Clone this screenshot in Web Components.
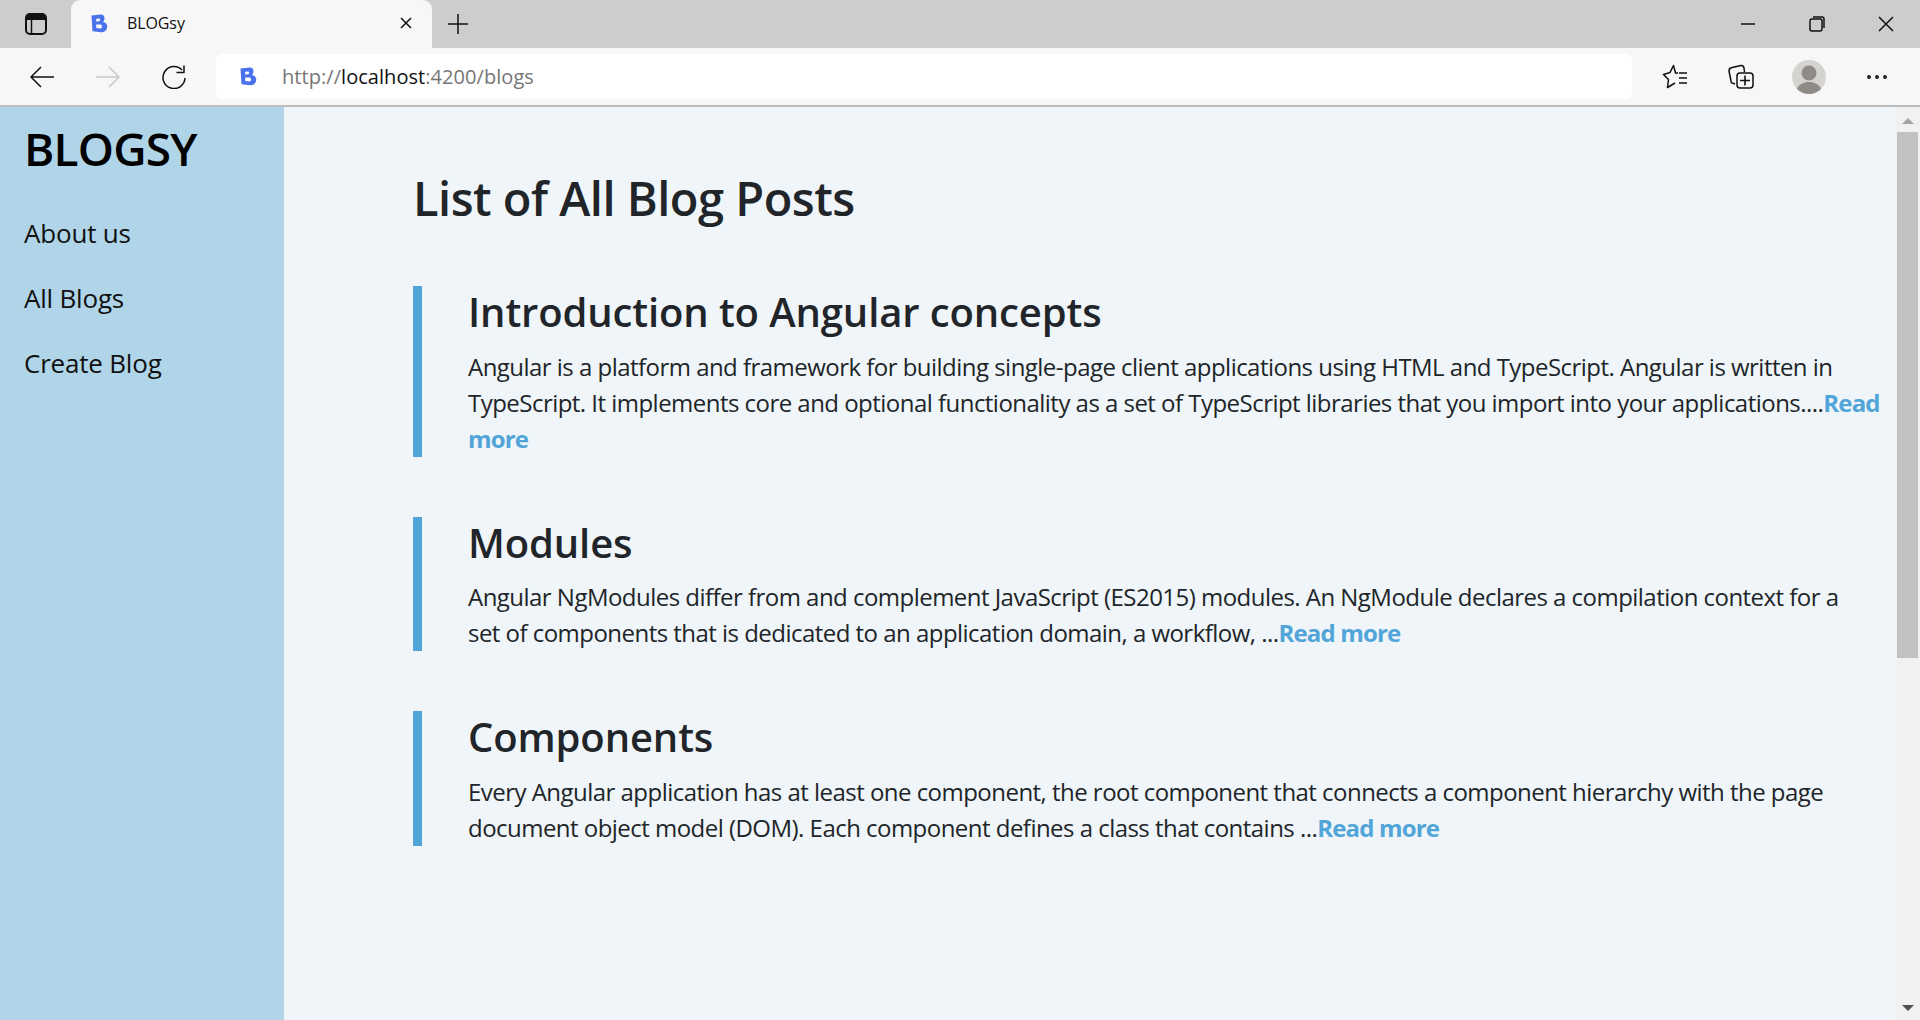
<!DOCTYPE html>
<html lang="en">
<head>
<meta charset="utf-8">
<title>BLOGsy</title>
<style>
  html, body { margin: 0; height: 100%; overflow: hidden; }
  body { display: flex; flex-direction: column; height: 1020px; font-family: "Open Sans", "Noto Sans", sans-serif; }
  .page { display: flex; flex: 1; min-height: 0; }
</style>
</head>
<body>
<browser-chrome></browser-chrome>
<div class="page">
  <side-bar>
    <span slot="brand">BLOGSY</span>
    <nav-link>About us</nav-link>
    <nav-link>All Blogs</nav-link>
    <nav-link>Create Blog</nav-link>
  </side-bar>
  <blog-list heading="List of All Blog Posts">
    <blog-post title-text="Introduction to Angular concepts">Angular is a platform and framework for building single-page client applications using HTML and TypeScript. Angular is written in TypeScript. It implements core and optional functionality as a set of TypeScript libraries that you import into your applications....</blog-post>
    <blog-post title-text="Modules">Angular NgModules differ from and complement JavaScript (ES2015) modules. An NgModule declares a compilation context for a<br>set of components that is dedicated to an application domain, a workflow, ...</blog-post>
    <blog-post title-text="Components">Every Angular application has at least one component, the root component that connects a component hierarchy with the page document object model (DOM). Each component defines a class that contains ...</blog-post>
  </blog-list>
  <scroll-bar></scroll-bar>
</div>

<script>
const favicon = `<svg class="fav" width="17" height="19" viewBox="0 0 17 19"><path fill-rule="evenodd" d="M.5 1.500L9.500.5C13 .5 13.500 3 13.500 4.500 13.500 6 12.500 7.500 12 8c2.500.5 4.500 2 4.200 5-.3 3.500-3 5.500-6.200 5.200L1.500 17.200zM5.200 4.700v2.800l3-.2c1.300-.3 1.300-2.600 0-2.800zM5.200 10.500v3.500l4.500.4c1.700 0 1.700-3.900 0-4z"/></svg>`;

class BrowserChrome extends HTMLElement {
  connectedCallback() {
    this.attachShadow({ mode: 'open' });
    this.shadowRoot.innerHTML = `
      <style>
        :host { display: block; flex: none; font-family: "Open Sans", sans-serif; color: #111; }
        svg { display: block; fill: none; stroke: currentColor; stroke-width: 1.5; stroke-linejoin: round; }
        svg.fav { fill: #4a72ea; stroke: none; flex: none; }
        .strip { height: 48px; background: #cdcdcd; display: flex; align-items: center; }
        .tabs-btn { width: 71px; display: flex; justify-content: center; }
        .tab { width: 361px; height: 48px; background: #f7f7f7; border-radius: 9px 9px 0 0; display: flex; align-items: center; box-sizing: border-box; padding: 0 0 2px 20px; }
        .tab .name { margin-left: 19px; flex: 1; font-size: 16px; letter-spacing: -.1px; }
        .tab svg:last-child { margin-right: 19px; }
        .plus { margin-left: 15px; }
        .win { margin-left: auto; display: flex; gap: 53px; padding-right: 26px; }
        .bar { height: 57px; background: #f7f7f7; border-bottom: 2px solid #bdbdbd; display: flex; align-items: center; }
        .nav { display: flex; gap: 42px; padding: 0 30px; width: 156px; }
        .addr { width: 1416px; height: 45px; background: #fff; border-radius: 6px; display: flex; align-items: center; }
        .addr svg.fav { margin-left: 24px; }
        .url { margin-left: 25px; font-size: 20px; letter-spacing: .05px; color: #767676; }
        .url b { font-weight: 400; color: #111; }
        .tools { display: flex; align-items: center; margin-left: 10px; }
        .tools .t { display: flex; width: 66px; justify-content: center; }
        .tools .t.avatar { width: 70px; }
      </style>
      <div class="strip">
        <div class="tabs-btn">
          <svg width="22" height="22" viewBox="0 0 22 22"><rect x="1" y="1" width="20" height="20" rx="4" stroke-width="2"/><path d="M1 4.500h20" stroke-width="5"/><path d="M6.500 6v14"/></svg>
        </div>
        <div class="tab">
          ${favicon}
          <span class="name">BLOGsy</span>
          <svg width="14" height="14" viewBox="0 0 14 14" stroke-width="2"><path d="M2 2l10 10M12 2L2 12"/></svg>
        </div>
        <svg class="plus" width="22" height="22" viewBox="0 0 22 22"><path d="M11 1v20M1 11h20"/></svg>
        <div class="win">
          <svg width="16" height="16" viewBox="0 0 16 16" stroke-width="1.2"><path d="M1 8h14"/></svg>
          <svg width="16" height="16" viewBox="0 0 16 16" stroke-width="1.2"><rect x="1" y="3" width="12" height="12" rx="2"/><path d="M4 1h9a2 2 0 0 1 2 2v9"/></svg>
          <svg width="16" height="16" viewBox="0 0 16 16" stroke-width="1.2"><path d="M1 1l14 14M15 1L1 15"/></svg>
        </div>
      </div>
      <div class="bar">
        <div class="nav">
          <svg width="24" height="24" viewBox="0 0 24 24"><path d="M24 12H1M11 2L1 12l10 10"/></svg>
          <svg width="24" height="24" viewBox="0 0 24 24" style="color:#c9c9c9"><path d="M0 12h23M13 2l10 10-10 10"/></svg>
          <svg width="24" height="24" viewBox="0 0 24 24" stroke-width="1.700"><path d="M20 5A11 11 0 1 0 23 13M22 .5v7h-7.500"/></svg>
        </div>
        <div class="addr">
          ${favicon}
          <span class="url">http://<b>localhost</b>:4200/blogs</span>
        </div>
        <div class="tools">
          <div class="t"><svg width="26" height="25" viewBox="0 0 26 25" stroke-width="2"><path d="M16 9h-2.500L11.500 1.500 8 8.500 1.500 10.500l5 5-1 8 7.500-4.500"/><path d="M17 9h8M17 14h8M17 19h8" stroke-width="1.600"/></svg></div>
          <div class="t"><svg width="26" height="25" viewBox="0 0 26 25" stroke-width="1.800"><path d="M7 20l-3-1q-1 0-1-2L1 7q0-3 3-3.500l9-2q2.500-.2 3 2.500l.5 4"/><rect x="9" y="9" width="16" height="15" rx="3"/><path d="M17 11.500v10M12 16.500h10" stroke-width="1.600"/></svg></div>
          <div class="t avatar"><svg width="34" height="34" viewBox="0 0 34 34" style="stroke:none"><circle cx="17" cy="17" r="17" fill="#d5d3cf"/><circle cx="17" cy="13" r="7.500" fill="#8f8c88"/><path d="M5 29c2-5 7-7 12-7s10 2 12 7a17 17 0 0 1-24 0z" fill="#8f8c88"/></svg></div>
          <div class="t"><svg width="20" height="4" viewBox="0 0 20 4" style="fill:#222;stroke:none"><circle cx="2" cy="2" r="2"/><circle cx="10" cy="2" r="2"/><circle cx="18" cy="2" r="2"/></svg></div>
        </div>
      </div>
    `;
  }
}
customElements.define('browser-chrome', BrowserChrome);

class SideBar extends HTMLElement {
  connectedCallback() {
    this.attachShadow({ mode: 'open' });
    this.shadowRoot.innerHTML = `
      <style>
        :host { display: block; flex: none; width: 284px; box-sizing: border-box; background: #b0d4e8; padding: 10px 24px; color: #000; }
        .brand { font: 600 46px/62px "Open Sans", sans-serif; letter-spacing: -.8px; margin-bottom: 36px; }
        .links { display: flex; flex-direction: column; gap: 29px; }
      </style>
      <div class="brand"><slot name="brand"></slot></div>
      <div class="links"><slot></slot></div>
    `;
  }
}
customElements.define('side-bar', SideBar);

class NavLink extends HTMLElement {
  connectedCallback() {
    this.attachShadow({ mode: 'open' });
    this.shadowRoot.innerHTML = `
      <style>
        :host { display: block; font: 400 26px/36px "Open Sans", sans-serif; letter-spacing: -.2px; color: #111; }
      </style>
      <slot></slot>
    `;
  }
}
customElements.define('nav-link', NavLink);

class BlogList extends HTMLElement {
  connectedCallback() {
    this.attachShadow({ mode: 'open' });
    this.shadowRoot.innerHTML = `
      <style>
        :host { display: block; flex: 1; min-width: 0; box-sizing: border-box; background: #eff5f8; padding: 61px 8px 0 129px; color: #212529; }
        h1 { margin: 0 0 58px; font: 600 47px/60px "Open Sans", sans-serif; letter-spacing: -.5px; }
        .posts { display: flex; flex-direction: column; gap: 60px; }
      </style>
      <h1>${this.getAttribute('heading')}</h1>
      <div class="posts"><slot></slot></div>
    `;
  }
}
customElements.define('blog-list', BlogList);

class BlogPost extends HTMLElement {
  connectedCallback() {
    this.attachShadow({ mode: 'open' });
    this.shadowRoot.innerHTML = `
      <style>
        :host { display: block; border-left: 9px solid #52a5d8; padding-left: 46px; }
        h2 { margin: 2px 0 12.5px; font: 600 40px/48px "Open Sans", sans-serif; letter-spacing: -.12px; }
        p { margin: 0; font: 400 24px/36px "Open Sans", sans-serif; letter-spacing: -.53px; }
        a { color: #52a5d8; font-weight: 700; text-decoration: none; letter-spacing: -.85px; }
      </style>
      <h2>${this.getAttribute('title-text')}</h2>
      <p><slot></slot><a href="#">Read more</a></p>
    `;
  }
}
customElements.define('blog-post', BlogPost);

class ScrollBar extends HTMLElement {
  connectedCallback() {
    this.attachShadow({ mode: 'open' });
    this.shadowRoot.innerHTML = `
      <style>
        :host { display: flex; flex-direction: column; align-items: center; flex: none; width: 25px; background: #f1f1f1; }
        .up, .down { width: 0; height: 0; border-left: 6px solid transparent; border-right: 6px solid transparent; }
        .up { border-bottom: 6px solid #a3a3a3; margin-top: 11px; }
        .thumb { width: 21px; height: 526px; background: #c1c1c1; margin-top: 8px; }
        .down { border-top: 6px solid #505050; margin-top: auto; margin-bottom: 9px; }
      </style>
      <div class="up"></div>
      <div class="thumb"></div>
      <div class="down"></div>
    `;
  }
}
customElements.define('scroll-bar', ScrollBar);
</script>
</body>
</html>
